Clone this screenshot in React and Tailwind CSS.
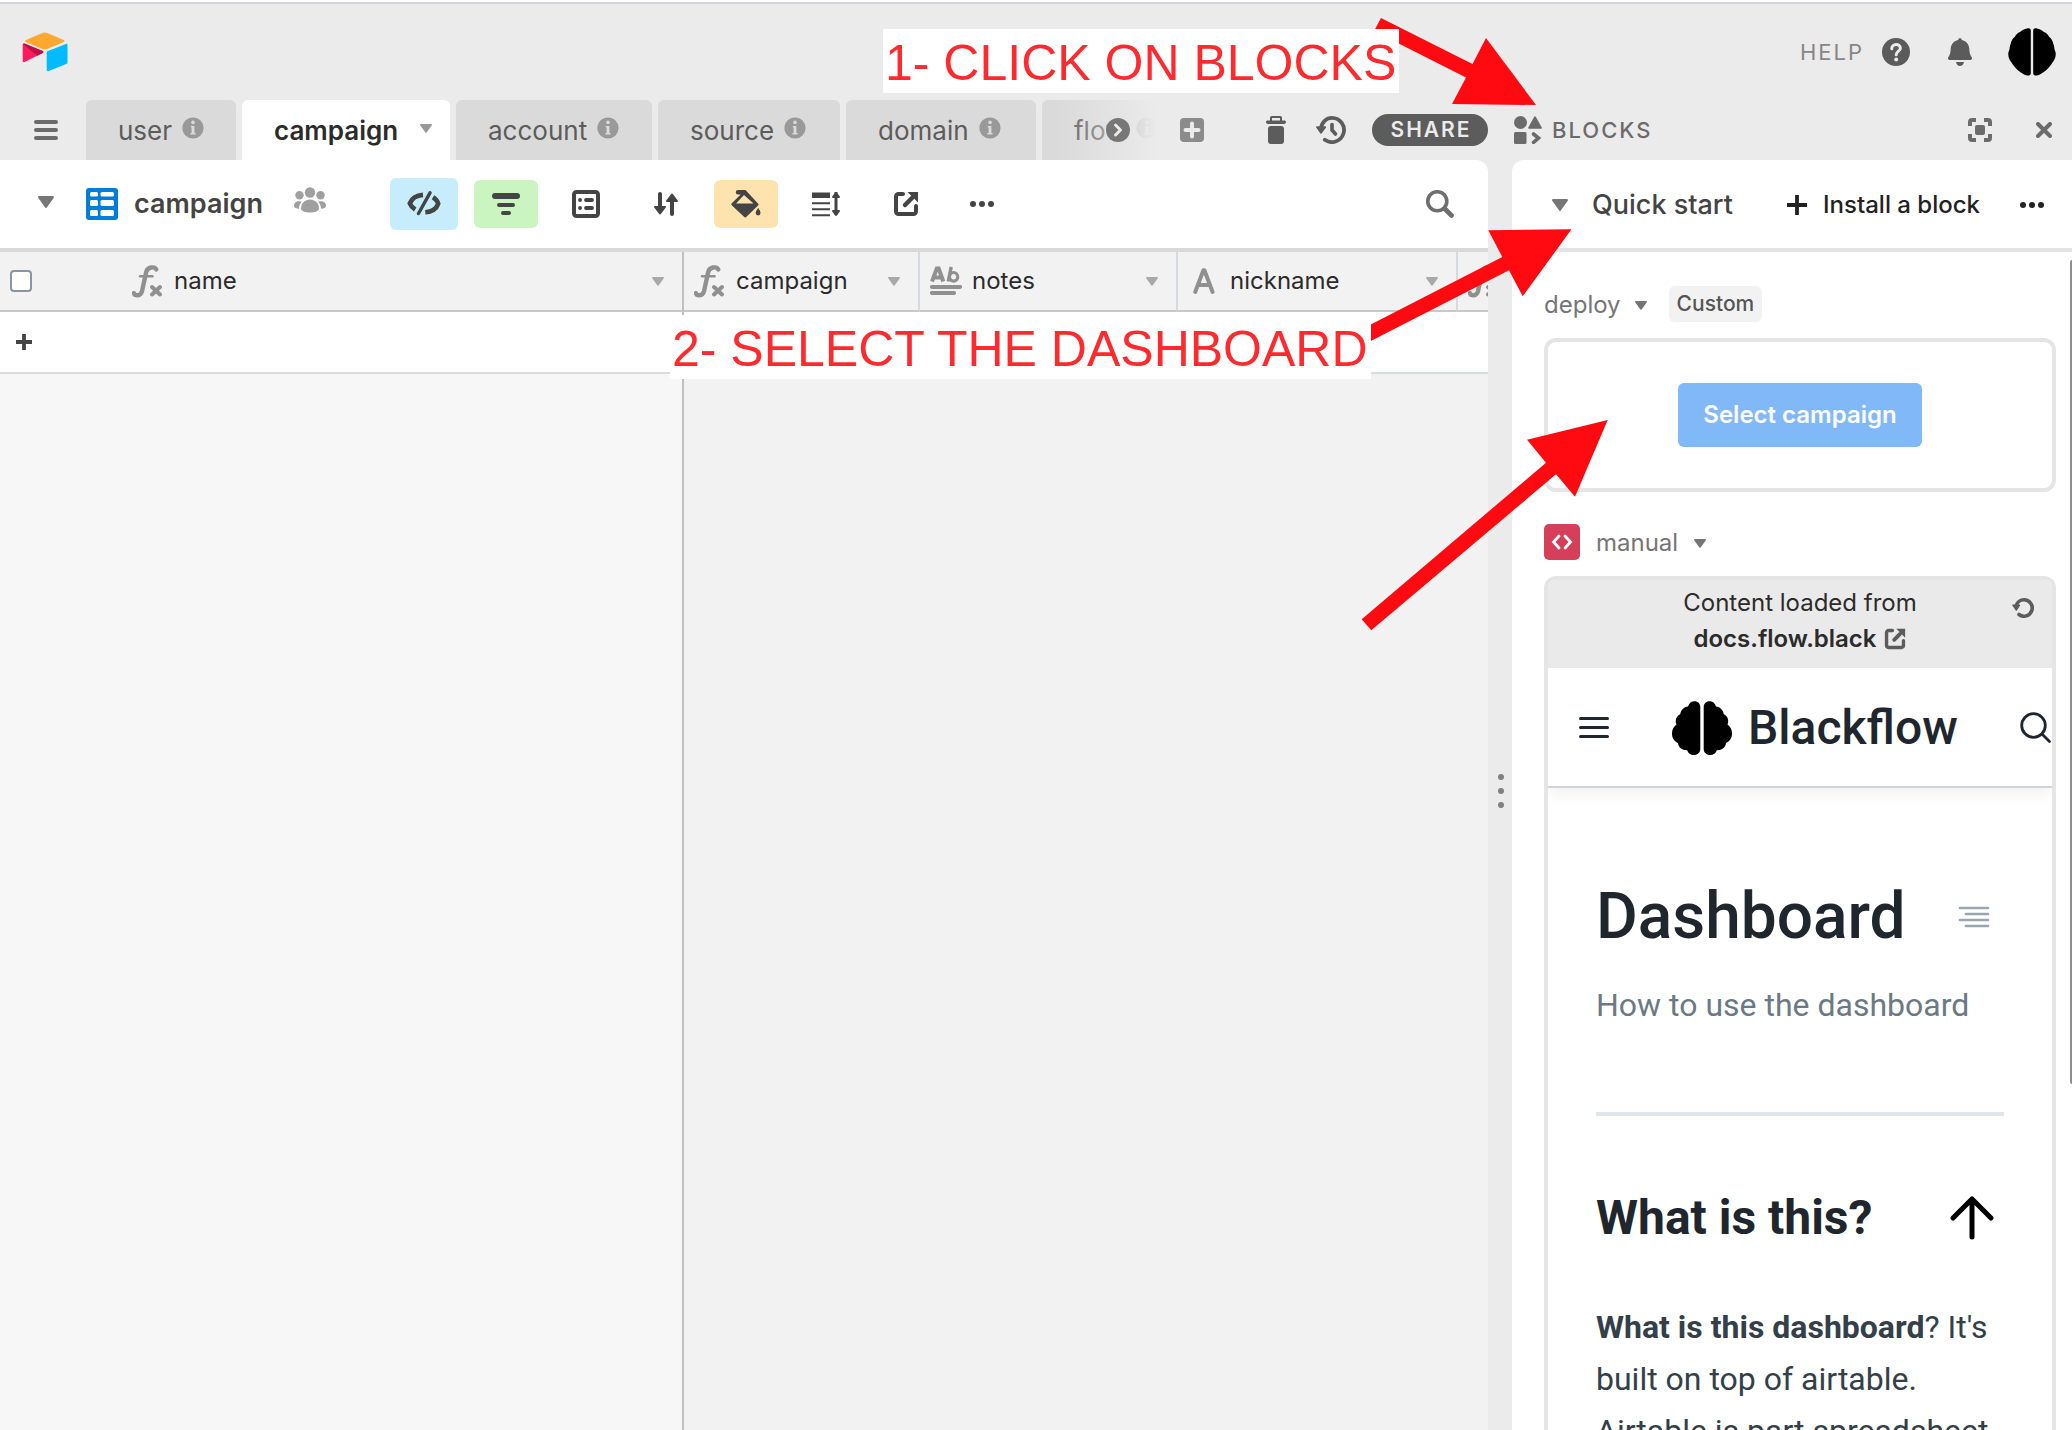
import React from "react";

const Caret = ({ className = "", w = 12, h = 9 }) => (
  <svg width={w} height={h} viewBox="0 0 12 9" preserveAspectRatio="none" fill="currentColor" aria-hidden="true" className={"shrink-0 " + className}>
    <path d="M.8 0h10.4a.8.8 0 0 1 .65 1.25L6.6 8.6a.75.75 0 0 1-1.2 0L.15 1.25A.8.8 0 0 1 .8 0z" />
  </svg>
);

const Dots = () => (
  <svg width="24" height="6" viewBox="0 0 24 6" fill="currentColor" aria-hidden="true">
    <circle cx="3" cy="3" r="3" />
    <circle cx="12" cy="3" r="3" />
    <circle cx="21" cy="3" r="3" />
  </svg>
);

const Info = ({ className = "" }) => (
  <svg width="22" height="22" viewBox="0 0 22 22" aria-hidden="true" className={"shrink-0 " + className}>
    <circle cx="11" cy="11" r="10.6" fill="#999" />
    <circle cx="11" cy="5.4" r="1.8" fill="#dadada" />
    <path d="M8.8 9h3.6v7h1.2v1.4H8.4V16h1.2v-5.6h-.8z" fill="#dadada" />
  </svg>
);

const Logo = () => (
  <svg width="46" height="40" viewBox="0 0 46 40" aria-hidden="true">
    <path d="M20.4 1.1 3.9 7.9c-.9.4-.9 1.7 0 2.1l16.6 6.9c1.500.6 3.100.6 4.600 0l16.600-6.900c.9-.4.9-1.700 0-2.100L25.200 1.100a6.300 6.300 0 0 0-4.800 0z" fill="#fea82f" />
    <path d="M24.700 20.300v17.800c0 .8.8 1.400 1.600 1.100l18.500-7.400c.4-.2.7-.6.7-1.100V13c0-.8-.8-1.400-1.600-1.100l-18.500 7.300c-.4.200-.7.6-.7 1.100z" fill="#00bcff" />
    <path d="m20.700 21-18.200 9.100c-.9.4-1.800-.1-1.800-1V12.600c0-.9.900-1.400 1.700-1l18.300 7.400c.9.400.9 1.600 0 2z" fill="#ff1a5e" />
    <path d="m20.700 21-5.500 2.700L1 12c.3-.4.9-.6 1.400-.4l18.300 7.400c.9.400.9 1.600 0 2z" fill="#bf1046" />
  </svg>
);

const SmoothBrain = () => (
  <svg width="48" height="48" viewBox="0 0 48 48" aria-hidden="true">
    <path d="M22.800 2.500V45.500C22.500 47.500 20.500 48 18 47.200 13 45.500 7 40.500 3.500 34.500 0 30-.5 25.500 1.200 22.300 1.800 20.500 1.500 18.500 2.800 15.500 3.200 13 4.500 10.500 6.800 9 8 6.500 9.500 5 12 4 14 2 16.500.8 19 .4 21.500-.2 22.600.5 22.800 2.500z" />
    <path d="M25.200 2.500V45.500C25.500 47.500 27.500 48 30 47.200 35 45.500 41 40.500 44.500 34.500 48 30 48.500 25.500 46.800 22.300 46.200 20.500 46.500 18.500 45.200 15.500 44.800 13 43.500 10.500 41.200 9 40 6.500 38.500 5 36 4 34 2 31.500.8 29 .4 26.500-.2 25.400.5 25.200 2.500z" />
  </svg>
);

const LobedBrain = () => (
  <svg width="60" height="54" viewBox="0 0 60 54" aria-hidden="true" className="shrink-0">
    <path d="M28.300 6v42c0 3.500-2.800 6-6.300 6-3.600 0-6-2-6.800-4.800-5 .2-8.800-2.700-9.200-7.200C1.800 40.300 0 36.500 0 32.500c0-3.800 1.600-7 4.500-9-1.800-4-.2-8.500 3.700-10.300C8.800 9 12 6 16 5.500 17 2 19.500.3 22.500.3c3.300 0 5.800 2.400 5.800 5.700z" />
    <path d="M31.700 6v42c0 3.500 2.800 6 6.300 6 3.600 0 6-2 6.800-4.800 5 .2 8.800-2.700 9.200-7.200 4.200-1.700 6-5.500 6-9.500 0-3.800-1.600-7-4.500-9 1.800-4 .2-8.500-3.700-10.300C51.200 9 48 6 44 5.500 43 2 40.500.3 37.500.3c-3.300 0-5.800 2.400-5.800 5.700z" />
  </svg>
);

const FxIcon = () => (
  <svg width="30" height="33" viewBox="0 0 30 33" fill="none" stroke="#909090" aria-hidden="true" className="shrink-0">
    <path d="M2 28.200c.6 2.600 6.600 3.500 8-2L14.200 7c1.300-5.500 8.600-5.700 10-2.600" strokeWidth="4.400" strokeLinecap="round" />
    <path d="M8 11.300h12.500" strokeWidth="2.400" strokeLinecap="round" />
    <path d="m20 22 8 7.500M28 22l-8 7.500" strokeWidth="4" strokeLinecap="round" />
  </svg>
);

const LongTextIcon = () => (
  <svg width="32" height="30" viewBox="0 0 32 30" fill="none" stroke="#909090" aria-hidden="true" className="shrink-0">
    <path d="M2 15.500 6.800 2.500h1.900L13.300 15.500M4 11.500h8" strokeWidth="4" />
    <path d="M21.200.8 18.200 15.500" strokeWidth="3.400" />
    <ellipse cx="23.600" cy="10.800" rx="4.100" ry="4.300" strokeWidth="3.200" />
    <path d="M1.800 21h28.400M1.800 27h22.400" strokeWidth="3.800" strokeLinecap="round" />
  </svg>
);

const TextIcon = () => (
  <svg width="32" height="28" viewBox="0 0 32 28" fill="none" stroke="#909090" strokeWidth="4" strokeLinecap="round" strokeLinejoin="round" aria-hidden="true" className="shrink-0">
    <path d="M7.200 25 15.400 3.200h1L24.600 25M10.500 18h11" />
  </svg>
);

const ShareOut = ({ s = 26, className = "" }) => (
  <svg width={s} height={s} viewBox="0 0 26 26" fill="none" stroke="currentColor" strokeWidth="4" aria-hidden="true" className={className}>
    <path d="M10 3H5.500A2.500 2.500 0 0 0 3 5.500v15A2.500 2.500 0 0 0 5.500 23h15a2.500 2.500 0 0 0 2.500-2.500V15" strokeLinecap="round" />
    <path d="M12 14 19 7" strokeWidth="4.500" strokeLinecap="round" />
    <path d="M14.500 1H25v10.500z" fill="currentColor" stroke="none" />
  </svg>
);

const Tab = ({ label, className }) => (
  <button className={"flex h-[60px] shrink-0 items-center rounded-t-md bg-[#dadada] pl-8 text-[26px] text-[#5c5c5c] " + className}>
    {label}
    <Info className="mb-1 ml-2.5" />
  </button>
);

const Tool = ({ label, className = "h-12 w-16", children }) => (
  <button aria-label={label} className={"flex shrink-0 items-center justify-center rounded-md " + className}>
    {children}
  </button>
);

const Head = ({ icon, label, border = "border-[#d5dae0]", check = false }) => (
  <th scope="col" className={"h-[60px] border-r-2 border-b-2 border-b-[#c8c8c8] p-0 text-left font-normal " + border}>
    <div className="flex items-center pr-[18px] pl-[10px]">
      {check && <input type="checkbox" aria-label="Select all" className="mr-[100px] size-[22px] shrink-0 appearance-none rounded-[4px] border-2 border-[#8796a0] bg-white" />}
      <span className="flex w-8 shrink-0">{icon}</span>
      <span className="ml-2.5 grow text-2xl text-[#2b2b2b]">{label}</span>
      <Caret className="text-[#a9a9a9]" />
    </div>
  </th>
);

function TopBar() {
  return (
    <div className="flex h-[100px] shrink-0 items-start border-t-2 border-white">
      <div className="flex h-full w-full items-start border-t-2 border-[#d0d5db] pt-6 pr-4 pl-[22px]">
        <a href="#home" aria-label="Home" className="mt-1">
          <Logo />
        </a>
        <div className="ml-auto flex h-12 items-center">
          <a href="#help" className="flex items-center text-[22px] tracking-[2px] text-[#868686]">
            HELP
            <svg width="28" height="28" viewBox="0 0 28 28" fill="none" aria-hidden="true" className="ml-[18px]">
              <circle cx="14" cy="14" r="14" fill="#5b5b5b" />
              <path d="M9.800 10.800c0-5.600 8.600-5.400 8.600-.6 0 3-4.200 3-4.200 6.600" stroke="#ebebeb" strokeWidth="3" strokeLinecap="round" />
              <circle cx="14.200" cy="21.600" r="2" fill="#ebebeb" />
            </svg>
          </a>
          <button aria-label="Notifications" className="ml-[38px]">
            <svg width="24" height="28" viewBox="0 0 24 28" fill="#5b5b5b" aria-hidden="true" className="block">
              <path d="M12 0c1 0 1.700.8 1.700 2C18.600 3 21 6.500 21.300 11c.2 3.700.8 6 2.400 8.300.8 1.300.1 2.700-1.200 2.700h-21C.2 22-.5 20.600.3 19.300 1.900 17 2.500 14.700 2.700 11 3 6.500 5.400 3 10.300 2c0-1.200.7-2 1.700-2zM8 24h8c-.5 2.600-2 4-4 4s-3.500-1.400-4-4z" />
            </svg>
          </button>
          <button aria-label="Account" className="ml-9">
            <SmoothBrain />
          </button>
        </div>
      </div>
    </div>
  );
}

function TabBar() {
  return (
    <div className="flex h-[60px] shrink-0 items-center">
      <button aria-label="All tables" className="ml-[34px]">
        <svg width="24" height="20" viewBox="0 0 24 20" stroke="#6b6b6b" strokeWidth="4" strokeLinecap="round" aria-hidden="true" className="block">
          <path d="M2 2h20M2 10h20M2 18h20" />
        </svg>
      </button>
      <div className="ml-7 flex gap-1.5">
        <Tab label="user" className="w-[150px]" />
        <button className="flex h-[60px] w-[208px] shrink-0 items-center rounded-t-md bg-white pr-[18px] pl-8 text-[26px] font-semibold text-[#2b2b2b]">
          campaign
          <Caret className="mb-1 ml-auto text-[#999]" />
        </button>
        <Tab label="account" className="w-[196px]" />
        <Tab label="source" className="w-[182px]" />
        <Tab label="domain" className="w-[190px]" />
        <div className="relative">
          <Tab label="flow" className="w-[120px]" />
          <div className="absolute inset-y-0 right-0 left-4 bg-linear-to-r from-transparent to-[#ebebeb] to-95%" />
          <button aria-label="Scroll tabs" className="absolute top-[18px] left-16">
            <svg width="24" height="24" viewBox="0 0 24 24" fill="none" aria-hidden="true" className="block">
              <circle cx="12" cy="12" r="12" fill="#777" />
              <path d="m9.500 7 5 5-5 5" stroke="#ebebeb" strokeWidth="3" strokeLinecap="round" strokeLinejoin="round" />
            </svg>
          </button>
        </div>
      </div>
      <button aria-label="Add table" className="ml-[18px]">
        <svg width="24" height="24" viewBox="0 0 24 24" aria-hidden="true" className="block">
          <rect width="24" height="24" rx="4" fill="#8b8b8b" />
          <path d="M12 5.500v13M5.500 12h13" stroke="#ebebeb" strokeWidth="4" strokeLinecap="round" />
        </svg>
      </button>
      <div className="ml-auto flex items-center">
        <button aria-label="Trash">
          <svg width="20" height="28" viewBox="0 0 20 28" fill="#5c5c5c" aria-hidden="true" className="block">
            <path d="M4 4.500V1.800C4 .8 4.800 0 5.800 0h8.400c1 0 1.800.8 1.800 1.800v2.700h2.300c1 0 1.700.7 1.700 1.600S19.300 8 18.300 8H1.700C.7 8 0 7 0 6.100s.7-1.600 1.700-1.600zM6 2v2.500h8V2z" />
            <rect x="2" y="10" width="16" height="18" rx="3" />
          </svg>
        </button>
        <button aria-label="History" className="ml-[30px]">
          <svg width="30" height="28" viewBox="0 0 30 28" fill="none" stroke="#5c5c5c" strokeWidth="3.800" strokeLinecap="round" aria-hidden="true" className="block">
            <path d="M5 13C5.400 6 10.500 1.900 16 1.900A12.100 12.100 0 1 1 8.800 23.800" />
            <path d="M.8 11h8.600L5 17z" fill="#5c5c5c" strokeWidth="1.500" strokeLinejoin="round" />
            <path d="M16 8.500V14l3.500 4" strokeWidth="3.600" />
          </svg>
        </button>
        <button className="ml-[26px] h-8 w-[116px] rounded-full bg-[#5c5c5c] pl-0.5 text-[21px] leading-8 font-semibold tracking-[2px] text-[#ebebeb]">SHARE</button>
      </div>
    </div>
  );
}

function ToolBar() {
  return (
    <div className="flex h-[92px] shrink-0 items-center rounded-tr-xl border-b-4 border-[#d9d9d9] bg-white pr-[34px] pl-[38px] text-[#444]">
      <button aria-label="Toggle views" className="mb-1">
        <Caret w={16} h={12} className="text-[#777]" />
      </button>
      <button className="ml-8 flex items-center text-[27px] font-semibold">
        <svg width="32" height="32" viewBox="0 0 32 32" fill="#fff" aria-hidden="true" className="mr-4">
          <rect width="32" height="32" rx="3" fill="#007cd9" />
          <rect x="4" y="4" width="8" height="4.500" rx="1.500" />
          <rect x="14.500" y="4" width="13.500" height="4.500" rx="1.500" />
          <rect x="4" y="12" width="8" height="6" rx="1.500" />
          <rect x="14.500" y="12" width="13.500" height="6" rx="1.500" />
          <rect x="4" y="22" width="8" height="6" rx="1.500" />
          <rect x="14.500" y="22" width="13.500" height="6" rx="1.500" />
        </svg>
        <span className="w-[130px] text-left">campaign</span>
      </button>
      <button aria-label="Collaborators" className="mb-2 ml-[30px]">
        <svg width="32" height="26" viewBox="0 0 32 26" fill="#a0a0a0" aria-hidden="true" className="block">
          <circle cx="16" cy="5.500" r="5.200" />
          <circle cx="5.500" cy="8.300" r="4.200" />
          <circle cx="26.500" cy="8.300" r="4.200" />
          <path d="M16 12.500c5 0 9 3.500 9 9 0 2.500-4 4-9 4s-9-1.500-9-4c0-5.500 4-9 9-9z" />
          <path d="M5 14.200c1 0 2 .2 2.700.5C5.800 16.800 5 19.300 5 21.700c-3-.2-5-1-5-2.700 0-2.800 2-4.800 5-4.800zM27 14.200c-1 0-2 .2-2.700.5 1.900 2.100 2.700 4.600 2.700 7 3-.2 5-1 5-2.700 0-2.800-2-4.800-5-4.800z" />
        </svg>
      </button>
      <div className="ml-16 flex items-center gap-4">
        <Tool label="Hidden fields" className="h-[52px] w-[68px] bg-[#c7edfd]">
          <svg width="34" height="26" viewBox="0 0 34 26" fill="none" stroke="currentColor" aria-hidden="true">
            <path d="M16 3.900C8.500 4.500 4.300 8.500 2.800 12.300c1 2.500 2.700 4.500 5.400 6.200M18.300 21.300C25.500 20.600 29.800 16.800 31.200 12.700c-.9-2.700-2.500-4.700-5.200-6.400" strokeWidth="4.600" />
            <path d="M23 1.800 11.500 22.500" strokeWidth="3.400" strokeLinecap="round" />
          </svg>
        </Tool>
        <Tool label="Filter" className="h-12 w-16 bg-[#caf5c0]">
          <svg width="28" height="22" viewBox="0 0 28 22" stroke="currentColor" strokeLinecap="round" aria-hidden="true">
            <path d="M3 3h22" strokeWidth="6" />
            <path d="M7 12h14M11 20h6" strokeWidth="4" />
          </svg>
        </Tool>
        <Tool label="Group">
          <svg width="28" height="28" viewBox="0 0 28 28" fill="none" stroke="currentColor" aria-hidden="true">
            <rect x="2" y="2" width="24" height="24" rx="2.500" strokeWidth="4" />
            <path d="M14 10h6M14 18h6" strokeWidth="3.800" strokeLinecap="round" />
            <path d="M8 10h.1M8 18h.1" strokeWidth="3.800" strokeLinecap="round" />
          </svg>
        </Tool>
        <Tool label="Sort">
          <svg width="24" height="24" viewBox="0 0 24 24" fill="currentColor" stroke="currentColor" strokeLinejoin="round" strokeLinecap="round" aria-hidden="true">
            <path d="M6 2v16M18 6v16" strokeWidth="4" />
            <path d="M1 15h10l-5 6.500zM13 9h10l-5-6.500z" strokeWidth="2" />
          </svg>
        </Tool>
        <Tool label="Color" className="h-12 w-16 bg-[#fee3ae]">
          <svg width="30" height="28" viewBox="0 0 30 28" fill="currentColor" aria-hidden="true">
            <path d="M7 0h7.500L27 13.500c.7.700.7 1.300 0 2L15.500 26.800c-.8.800-1.700.8-2.500 0L1 15.500c-.8-.8-.8-1.700 0-2.500l8.700-8.500H7A2.200 2.200 0 0 1 7 0zm6 5-8 8.500h17.500z" />
            <path d="M27.200 17.800c1.500 2.500 2.300 4 2.300 5.300a2.400 2.400 0 0 1-4.800 0c0-1.300.9-2.800 2.500-5.300z" />
          </svg>
        </Tool>
        <Tool label="Row height">
          <svg width="28" height="26" viewBox="0 0 28 26" fill="currentColor" aria-hidden="true">
            <path d="M0 1.500h18v5.500H0zM0 11.200h18v2.100H0zM0 17.200h18v2.100H0zM0 23.200h18v2.100H0z" />
            <path d="M24 1v23" stroke="currentColor" strokeWidth="3" />
            <path d="M21 6h6l-3-4zM21 20h6l-3 4z" stroke="currentColor" strokeWidth="2" strokeLinejoin="round" />
          </svg>
        </Tool>
        <Tool label="Share view">
          <ShareOut />
        </Tool>
        <Tool label="More" className="h-12 w-14">
          <Dots />
        </Tool>
      </div>
      <button aria-label="Search" className="ml-auto">
        <svg width="28" height="28" viewBox="0 0 28 28" fill="none" stroke="#6e6e6e" strokeLinecap="round" aria-hidden="true" className="block">
          <circle cx="11.300" cy="11.300" r="9.500" strokeWidth="3.600" />
          <path d="m19 19 6.500 6.500" strokeWidth="4.600" />
        </svg>
      </button>
    </div>
  );
}

function Grid() {
  return (
    <>
      <table className="w-full table-fixed border-separate border-spacing-0 bg-[#f2f2f2]">
        <colgroup>
          <col className="w-[684px]" />
          <col className="w-[236px]" />
          <col className="w-[258px]" />
          <col className="w-[280px]" />
          <col />
        </colgroup>
        <thead>
          <tr>
            <Head check icon={<FxIcon />} label="name" border="border-r-[#c0c0c0]" />
            <Head icon={<FxIcon />} label="campaign" />
            <Head icon={<LongTextIcon />} label="notes" />
            <Head icon={<TextIcon />} label="nickname" />
            <th scope="col" aria-label="Formula" className="h-[60px] overflow-hidden border-b-2 border-[#c8c8c8] p-0 pl-2.5">
              <FxIcon />
            </th>
          </tr>
        </thead>
        <tbody>
          <tr className="bg-white">
            <td className="h-[62px] border-r-2 border-b-2 border-r-[#c0c0c0] border-b-[#d9dde1] p-0 pl-4">
              <button aria-label="Add record" className="block">
                <svg width="16" height="16" viewBox="0 0 16 16" stroke="#444" strokeWidth="3.800" aria-hidden="true" className="block">
                  <path d="M8 0v16M0 8h16" />
                </svg>
              </button>
            </td>
            <td colSpan={4} className="border-b-2 border-[#d9dde1] p-0" />
          </tr>
        </tbody>
      </table>
      <div className="flex grow">
        <div className="w-[684px] shrink-0 border-r-2 border-[#c0c0c0] bg-[#f7f7f7]" />
        <div className="grow bg-[#f2f2f2]" />
      </div>
    </>
  );
}

function Docs() {
  return (
    <article className="bg-white font-['Roboto',sans-serif] text-[#33404a]">
      <div className="flex h-[120px] items-center overflow-hidden border-b-2 border-[#cdd4da] pt-0.5 pl-[31px] shadow-[0_6px_16px_rgba(0,0,0,0.06)]">
        <button aria-label="Menu" className="shrink-0">
          <svg width="30" height="24" viewBox="0 0 30 24" stroke="#20262d" strokeWidth="3" strokeLinecap="round" aria-hidden="true" className="block">
            <path d="M1.500 2.500h27M1.500 11.500h27M1.500 20.500h27" />
          </svg>
        </button>
        <a href="#docs" className="ml-[63px] flex items-center text-5xl font-medium text-[#20262d]">
          <LobedBrain />
          <span className="ml-4">Blackflow</span>
        </a>
        <button aria-label="Search docs" className="-mr-1 ml-auto shrink-0">
          <svg width="36" height="32" viewBox="0 0 36 32" fill="none" stroke="#20262d" strokeWidth="2.800" strokeLinecap="round" aria-hidden="true" className="block">
            <circle cx="13.500" cy="13.500" r="11.800" />
            <path d="m22 22 7.500 7.500" />
          </svg>
        </button>
      </div>
      <div className="px-12 pt-[89px]">
        <div className="flex items-center">
          <h1 className="text-[64px] leading-[80px] font-medium text-[#20262d]">Dashboard</h1>
          <button aria-label="Contents" className="mr-[14px] ml-auto">
            <svg width="32" height="24" viewBox="0 0 32 24" stroke="#9aa7b3" strokeWidth="2.700" strokeLinecap="round" aria-hidden="true" className="block">
              <path d="M2 3h28M8 9h22M2 15h28M8 21h22" />
            </svg>
          </button>
        </div>
        <p className="mt-[22px] text-[32px] leading-[52px] text-[#6b7984]">How to use the dashboard</p>
        <hr className="mt-[81px] border-t-4 border-[#e1e6eb]" />
        <div className="mt-[72px] flex items-center">
          <h2 className="text-5xl leading-[60px] font-bold text-[#20262d]">What is this?</h2>
          <a href="#top" aria-label="Back to top" className="mr-[10px] ml-auto">
            <svg width="44" height="44" viewBox="0 0 44 44" fill="none" stroke="#000" strokeWidth="5" strokeLinecap="round" strokeLinejoin="round" aria-hidden="true" className="block">
              <path d="M22 41V3M3 22 22 3l19 19" />
            </svg>
          </a>
        </div>
        <p className="mt-[53px] text-[32px] leading-[52px]">
          <strong className="font-bold">What is this dashboard</strong>? It's built on top of airtable. Airtable is part spreadsheet
        </p>
      </div>
    </article>
  );
}

function BlocksPanel() {
  return (
    <aside className="flex w-[560px] shrink-0 flex-col">
      <div className="flex h-[60px] shrink-0 items-center pr-5 text-[#6b6b6b]">
        <button className="ml-0.5 flex items-center text-[22px] font-medium tracking-[2px]">
          <svg width="28" height="28" viewBox="0 0 28 28" fill="currentColor" aria-hidden="true" className="mr-2.5">
            <circle cx="6.500" cy="6.500" r="6.500" />
            <path d="M20.200.8c.4-.7 1.200-.7 1.600 0l6 10.600c.4.700.1 1.300-.7 1.300H15c-.8 0-1.100-.6-.7-1.300z" />
            <rect y="16" width="12.500" height="12" rx="1.500" />
            <path d="m19.500 18 5 4-5 4.300" fill="none" stroke="currentColor" strokeWidth="3.600" strokeLinecap="round" />
          </svg>
          BLOCKS
        </button>
        <button aria-label="Fullscreen" className="ml-auto">
          <svg width="24" height="24" viewBox="0 0 24 24" fill="none" stroke="currentColor" strokeWidth="4" aria-hidden="true" className="block">
            <path d="M2 8V4a2 2 0 0 1 2-2h4M16 2h4a2 2 0 0 1 2 2v4M22 16v4a2 2 0 0 1-2 2h-4M8 22H4a2 2 0 0 1-2-2v-4" />
            <rect x="7" y="7" width="10" height="10" rx="2" fill="currentColor" stroke="none" />
          </svg>
        </button>
        <button aria-label="Close blocks" className="ml-11">
          <svg width="16" height="16" viewBox="0 0 16 16" stroke="currentColor" strokeWidth="4" strokeLinecap="round" aria-hidden="true" className="block">
            <path d="m2 2 12 12M14 2 2 14" />
          </svg>
        </button>
      </div>
      <div className="flex min-h-0 grow flex-col rounded-tl-xl bg-white">
        <div className="flex h-[92px] shrink-0 items-center border-b-4 border-[#e3e3e3] pt-0.5 pr-7 pl-10">
          <button className="flex items-center text-[27px] font-medium text-[#444]">
            <Caret w={16} h={12} className="mr-6 text-[#777]" />
            Quick start
          </button>
          <button className="ml-auto flex items-center text-2xl font-medium text-[#222]">
            <svg width="20" height="20" viewBox="0 0 20 20" stroke="currentColor" strokeWidth="3.800" aria-hidden="true" className="mr-4">
              <path d="M10 0v20M0 10h20" />
            </svg>
            Install a block
          </button>
          <button aria-label="Dashboard options" className="ml-10 text-[#222]">
            <Dots />
          </button>
        </div>
        <div className="relative flex min-h-0 grow flex-col overflow-hidden px-8 pt-[34px] pr-4">
          <div className="flex h-9 shrink-0 items-center">
            <button className="flex items-center pt-0.5 text-2xl text-[#757575]">
              deploy
              <Caret className="ml-3.5 text-[#757575]" />
            </button>
            <span className="ml-[22px] flex h-9 items-center rounded-md bg-[#f2f2f2] px-2 text-[21px] font-medium text-[#555]">Custom</span>
          </div>
          <div className="mt-4 flex h-[154px] shrink-0 items-center justify-center rounded-xl border-4 border-[#e5e5e5]">
            <button className="h-16 rounded-md bg-[#81b9f8] px-[25px] text-2xl font-semibold text-white">Select campaign</button>
          </div>
          <div className="mt-8 flex h-9 shrink-0 items-center">
            <svg width="36" height="36" viewBox="0 0 36 36" fill="none" aria-hidden="true" className="mr-4">
              <rect width="36" height="36" rx="5" fill="#d63f59" />
              <path d="m15 12-5.500 6 5.500 6M21 12l5.500 6-5.500 6" stroke="#fff" strokeWidth="2.800" strokeLinecap="round" />
            </svg>
            <button className="flex items-center pt-0.5 text-2xl text-[#757575]">
              manual
              <Caret className="ml-4 text-[#757575]" />
            </button>
          </div>
          <div className="mt-4 flex min-h-0 grow flex-col overflow-hidden rounded-t-xl border-4 border-b-0 border-[#e5e5e5]">
            <div className="relative h-[88px] shrink-0 bg-[#eaeaea] pt-[5px] text-center text-2xl leading-9 text-[#2b2b2b]">
              <p>Content loaded from</p>
              <a href="#docs" className="inline-flex items-center font-semibold">
                docs.flow.black
                <ShareOut s={22} className="ml-2 text-[#5c5c5c]" />
              </a>
              <button aria-label="Reload" className="absolute top-[18px] right-[18px]">
                <svg width="22" height="20" viewBox="0 0 22 20" fill="none" stroke="#5c5c5c" strokeWidth="3.600" strokeLinecap="round" aria-hidden="true" className="block">
                  <path d="M4 8C5 4 8.500 1.800 12 1.800A8.200 8.200 0 1 1 7 16.500" />
                  <path d="M1 7.200h6.500L4.300 12z" fill="#5c5c5c" strokeWidth="1.500" strokeLinejoin="round" />
                </svg>
              </button>
            </div>
            <Docs />
          </div>
          <div className="absolute top-2 right-0 h-[824px] w-0.5 rounded-l bg-[#8f8f8f]" />
        </div>
      </div>
    </aside>
  );
}

function Annotations() {
  return (
    <div className="pointer-events-none absolute inset-0 font-['Liberation_Sans',sans-serif] text-[50px] leading-[60px] text-[#ff2a2e]">
      <svg width="1620" height="640" viewBox="0 0 1620 640" fill="#ff0a10" aria-hidden="true" className="absolute top-0 left-0">
        <path d="M1381 18 1472.500 64 1486 38 1536 105 1452 104 1466 77.500 1374 31z" />
        <path d="M1571.500 229.300 1488.300 230.300 1502.300 257 1362 329 1362 345.500 1509 270.300 1522.700 296.300z" />
        <path d="M1607.700 420 1527 439.700 1546 462.700 1361.700 619.300 1371.300 630.300 1556 474.300 1575 496.700z" />
      </svg>
      <p className="absolute top-[29px] left-[883px] w-[516px] bg-white pt-1 pl-0.5 whitespace-nowrap">1- CLICK ON BLOCKS</p>
      <p className="absolute top-[315px] left-[670px] w-[701px] bg-white pt-1 pl-0.5 whitespace-nowrap">2- SELECT THE DASHBOARD</p>
    </div>
  );
}

export default function App() {
  return (
    <div className="relative flex h-screen flex-col overflow-hidden bg-[#ebebeb] font-['Inter',sans-serif]">
      <TopBar />
      <div className="flex min-h-0 grow">
        <main className="flex min-w-0 grow flex-col">
          <TabBar />
          <ToolBar />
          <Grid />
        </main>
        <div className="flex w-6 shrink-0 flex-col items-center justify-center gap-2 pt-[52px] pl-0.5">
          <span className="size-1.5 rounded-full bg-[#808080]" />
          <span className="size-1.5 rounded-full bg-[#808080]" />
          <span className="size-1.5 rounded-full bg-[#808080]" />
        </div>
        <BlocksPanel />
      </div>
      <Annotations />
    </div>
  );
}
